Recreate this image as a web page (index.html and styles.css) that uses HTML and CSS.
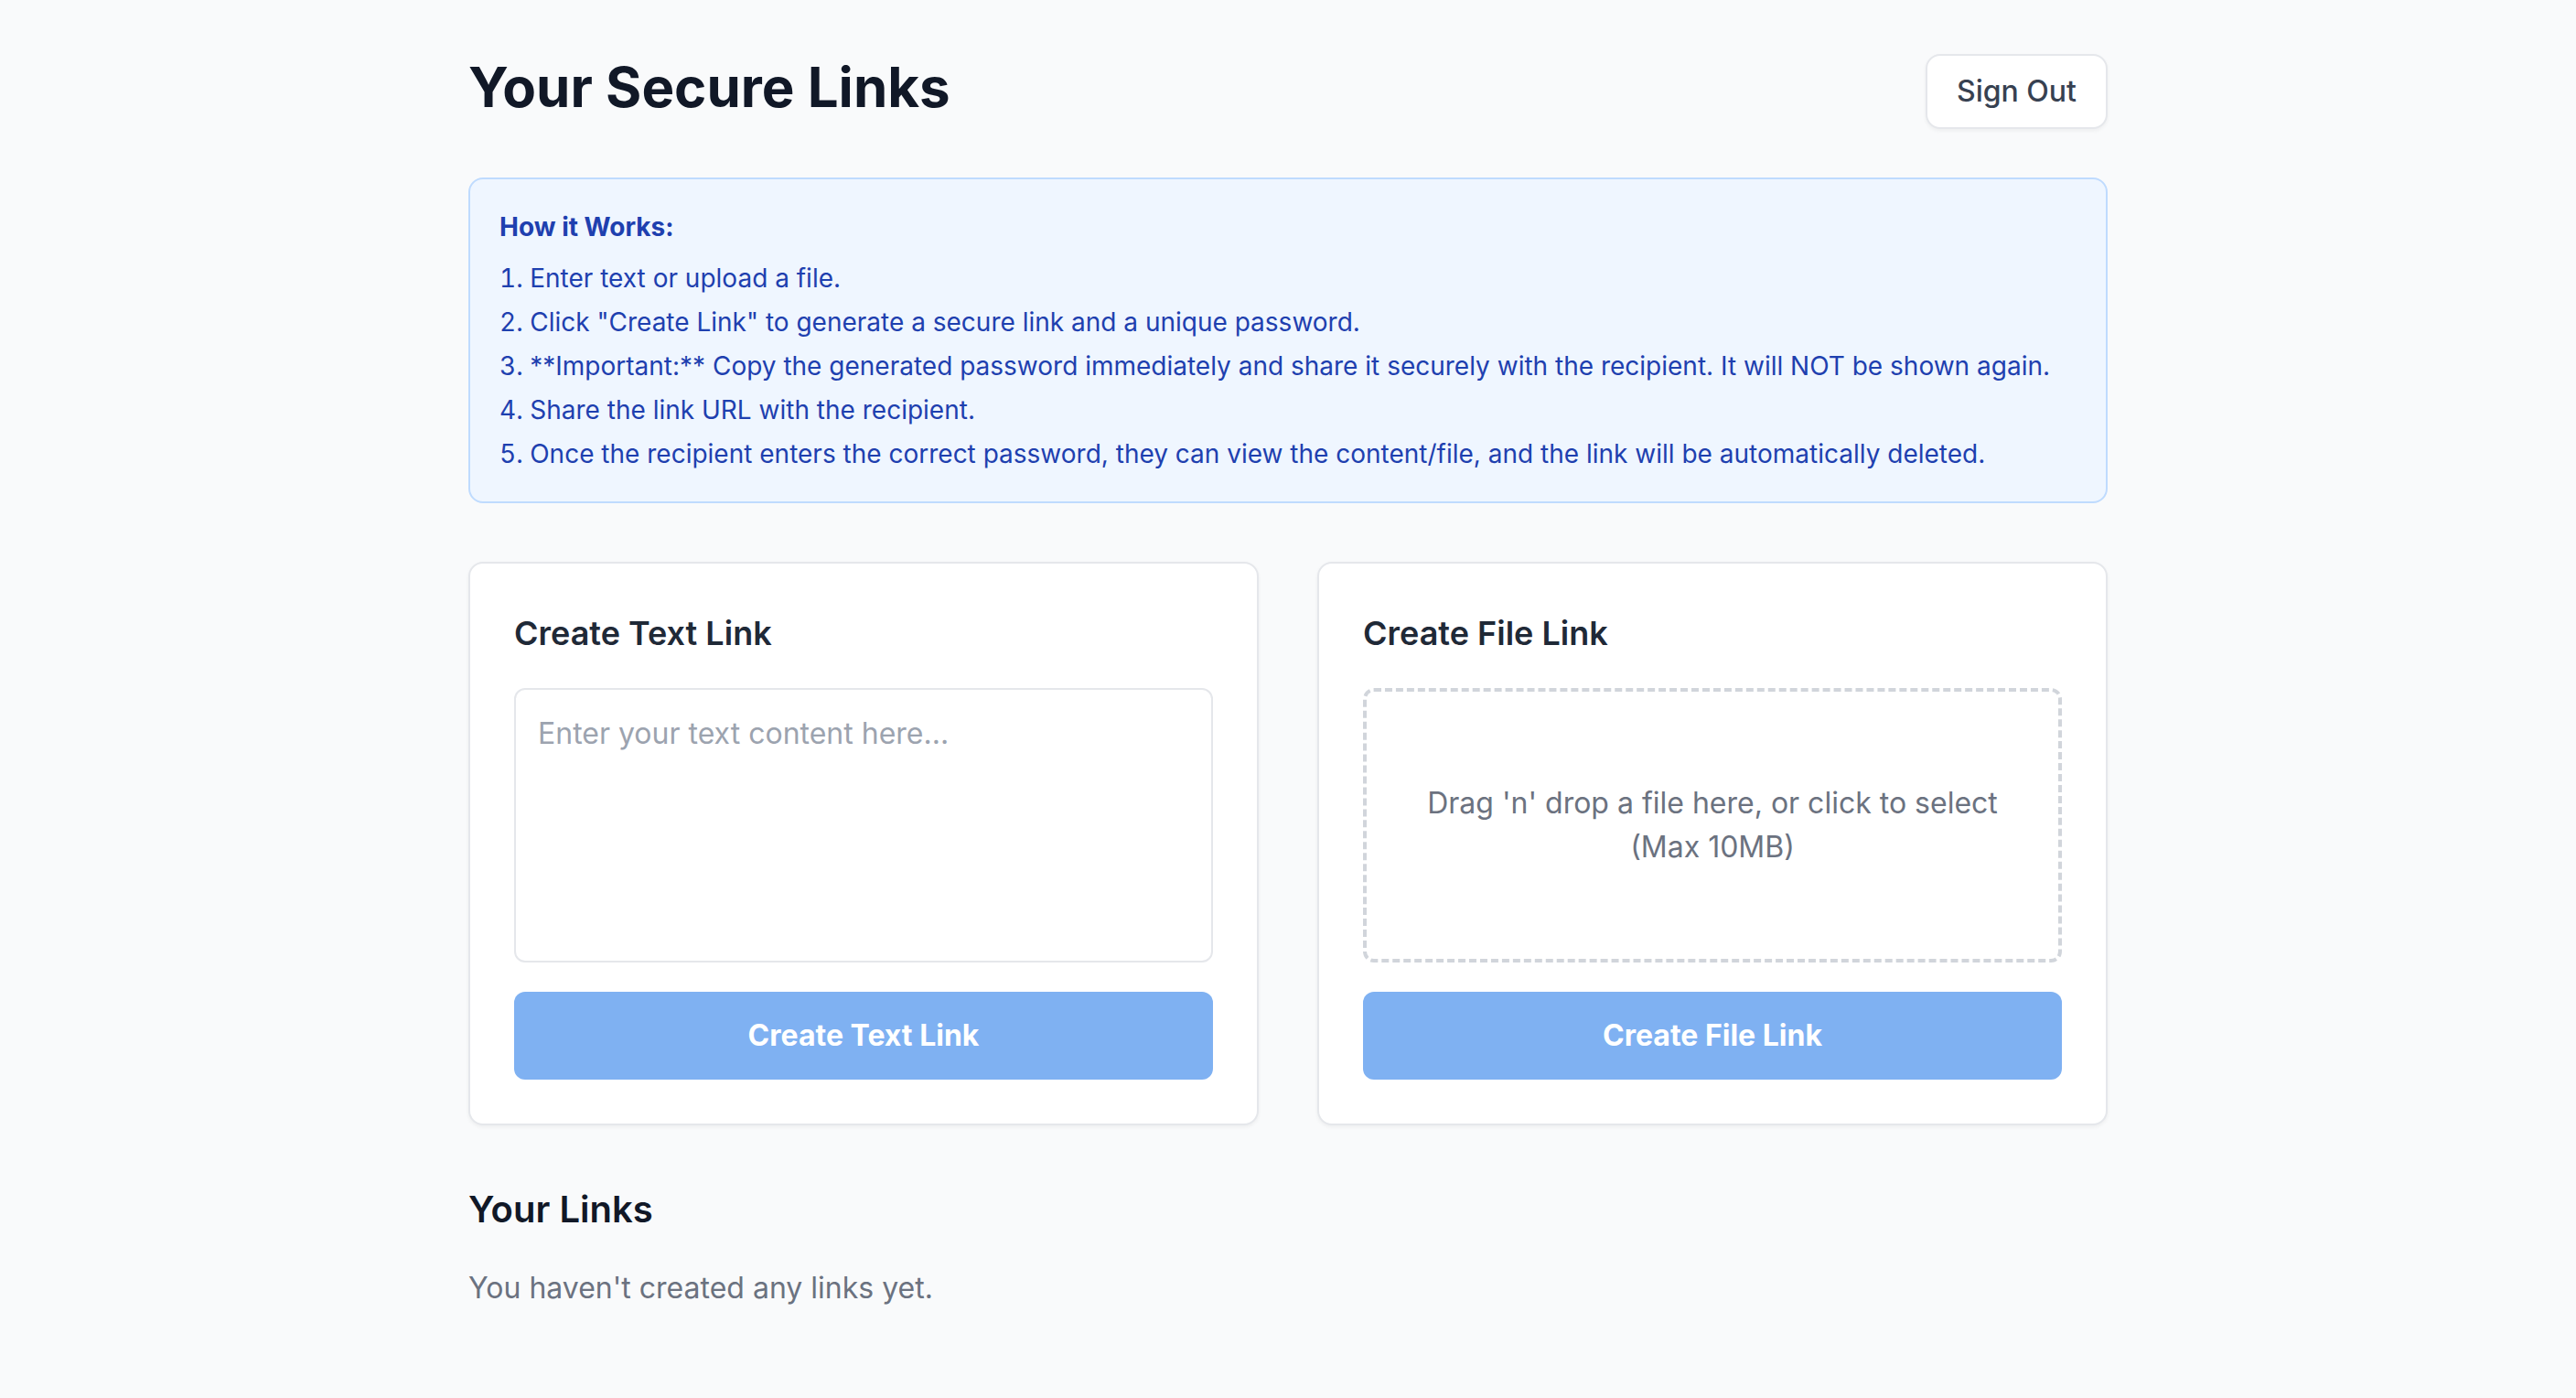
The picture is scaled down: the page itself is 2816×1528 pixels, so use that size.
FILE: index.html
```html
<!DOCTYPE html>
<html lang="en">
<head>
    <meta charset="UTF-8">
    <meta name="viewport" content="width=device-width, initial-scale=1.0">
    <title>Your Secure Links</title>
    <link rel="stylesheet" href="styles.css">
</head>
<body>
    <div class="page">
        <header class="top-bar">
            <h1>Your Secure Links</h1>
            <button type="button" class="sign-out">Sign Out</button>
        </header>

        <section class="how-it-works">
            <h2>How it Works:</h2>
            <ol>
                <li>Enter text or upload a file.</li>
                <li>Click "Create Link" to generate a secure link and a unique password.</li>
                <li>**Important:** Copy the generated password immediately and share it securely with the recipient. It will NOT be shown again.</li>
                <li>Share the link URL with the recipient.</li>
                <li>Once the recipient enters the correct password, they can view the content/file, and the link will be automatically deleted.</li>
            </ol>
        </section>

        <div class="create-grid">
            <div class="card">
                <h3>Create Text Link</h3>
                <textarea class="text-input" placeholder="Enter your text content here..."></textarea>
                <button type="button" class="create-btn" disabled>Create Text Link</button>
            </div>
            <div class="card">
                <h3>Create File Link</h3>
                <div class="dropzone">
                    <p>Drag 'n' drop a file here, or click to select<br>(Max 10MB)</p>
                </div>
                <button type="button" class="create-btn" disabled>Create File Link</button>
            </div>
        </div>

        <section class="your-links">
            <h2>Your Links</h2>
            <p class="empty">You haven't created any links yet.</p>
        </section>
    </div>
</body>
</html>
```

FILE: styles.css
```css
* {
    box-sizing: border-box;
}
body {
    margin: 0;
    background-color: #f9fafb;
    font-family: Inter, "Noto Sans", sans-serif;
    color: #111827;
}
.page {
    width: 1792px;
    margin: 0 auto;
    padding-top: 59px;
    padding-bottom: 64px;
}
.top-bar {
    display: flex;
    justify-content: space-between;
    align-items: flex-start;
    margin-bottom: 53px;
}
.top-bar h1 {
    margin: 0;
    font-size: 60px;
    line-height: 72px;
    font-weight: 700;
    color: #111827;
}
.sign-out {
    font-family: inherit;
    font-size: 32px;
    line-height: 48px;
    font-weight: 500;
    color: #374151;
    background-color: #fff;
    border: 2px solid #e5e7eb;
    border-radius: 16px;
    padding: 15px 32px;
    box-shadow: 0 2px 4px rgba(0, 0, 0, 0.05);
    cursor: pointer;
}

.how-it-works {
    background-color: #eff6ff;
    border: 2px solid #bfdbfe;
    border-radius: 16px;
    padding: 32px;
    margin-bottom: 64px;
    color: #1e40af;
}
.how-it-works h2 {
    margin: 0 0 16px;
    font-size: 28px;
    line-height: 40px;
    font-weight: 700;
}
.how-it-works ol {
    margin: 0;
    padding: 0;
    list-style: decimal inside;
    display: flex;
    flex-direction: column;
    gap: 8px;
}
.how-it-works li {
    font-size: 28px;
    line-height: 40px;
}

.create-grid {
    display: grid;
    grid-template-columns: 1fr 1fr;
    gap: 64px;
}
.card {
    background-color: #fff;
    border: 2px solid #e5e7eb;
    border-radius: 16px;
    padding: 48px;
    box-shadow: 0 2px 4px rgba(0, 0, 0, 0.05);
}
.card h3 {
    margin: 0 0 32px;
    font-size: 36px;
    line-height: 56px;
    font-weight: 600;
    color: #1f2937;
}
.text-input {
    display: block;
    width: 100%;
    height: 300px;
    padding: 24px;
    font-family: inherit;
    font-size: 32px;
    line-height: 48px;
    color: #111827;
    border: 2px solid #e5e7eb;
    border-radius: 12px;
    resize: none;
    outline: none;
}
.text-input::placeholder {
    color: #9ca3af;
}
.dropzone {
    height: 300px;
    border: 4px dashed #d1d5db;
    border-radius: 12px;
    display: flex;
    align-items: center;
    justify-content: center;
    text-align: center;
    padding: 24px;
    cursor: pointer;
}
.dropzone p {
    margin: 0;
    font-size: 32px;
    line-height: 48px;
    color: #6b7280;
}
.create-btn {
    display: block;
    width: 100%;
    margin-top: 32px;
    padding: 24px;
    font-family: inherit;
    font-size: 32px;
    line-height: 48px;
    font-weight: 700;
    color: #fff;
    background-color: #7fb1f2;
    border: none;
    border-radius: 12px;
}

.your-links {
    margin-top: 64px;
}
.your-links h2 {
    margin: 0 0 34px;
    font-size: 40px;
    line-height: 56px;
    font-weight: 600;
    color: #111827;
}
.empty {
    margin: 0;
    font-size: 32px;
    line-height: 48px;
    color: #6b7280;
}
```
